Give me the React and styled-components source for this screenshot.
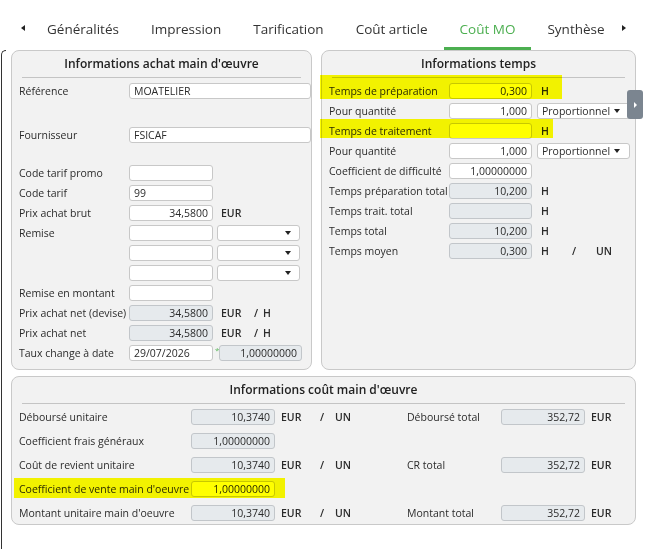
import styled, { createGlobalStyle } from 'styled-components'

const GlobalStyle = createGlobalStyle`
  body {
    margin: 0;
    background: #fff;
    font-family: "Open Sans", "Noto Sans", sans-serif;
    color: #333;
  }
`

const Page = styled.div`
  position: relative;
  width: 654px;
  height: 549px;
  &::before {
    content: '';
    position: absolute;
    left: 1px;
    top: 40px;
    bottom: 4px;
    width: 4px;
    border: 1.5px solid #333;
    border-right: none;
    border-radius: 5px 0 0 5px;
  }
`

const TabBar = styled.nav`
  display: flex;
  height: 40px;
  margin-top: 10px;
  padding-left: 14px;
`

const Arrow = styled.span`
  display: flex;
  align-items: center;
  justify-content: center;
  width: ${p => p.$w}px;
  padding-bottom: 4px;
  &::after {
    content: '';
    border-top: 3.5px solid transparent;
    border-bottom: 3.5px solid transparent;
    ${p => (p.$dir === 'left' ? 'border-right: 4px solid #222;' : 'border-left: 4px solid #222;')}
  }
`

const Tab = styled.div`
  display: flex;
  align-items: center;
  padding: 0 16px;
  font-size: 13.5px;
  color: ${p => (p.$active ? '#4caf50' : '#333')};
  border-bottom: 3px solid ${p => (p.$active ? '#4caf50' : 'transparent')};
`

const SideKnob = styled.div`
  position: absolute;
  left: 627px;
  top: 80px;
  width: 16px;
  height: 29px;
  border-radius: 3px;
  background: #7b8590;
  display: flex;
  align-items: center;
  justify-content: center;
  &::after {
    content: '';
    border-top: 3px solid transparent;
    border-bottom: 3px solid transparent;
    border-left: 3px solid #fff;
  }
`

const Content = styled.main`
  display: grid;
  grid-template-columns: 301px 315px;
  grid-template-rows: 320px auto;
  gap: 6px 9px;
  padding-left: 11px;
`

const Panel = styled.section`
  position: relative;
  box-sizing: border-box;
  background: #f2f2f2;
  border: 1px solid #c9c9c9;
  border-radius: 8px;
  padding: 4px 0 1px;
  ${p => p.$wide && 'grid-column: 1 / -1;'}
`

const Title = styled.h2`
  margin: 0 0 4px;
  height: 18px;
  line-height: 18px;
  font-size: 12px;
  font-weight: 600;
  text-align: center;
  color: #222;
`

const Rule = styled.div`
  margin: 0 10px 3px;
  border-top: 1px solid #c4c4c4;
`

const Row = styled.div`
  position: relative;
  display: flex;
  align-items: center;
  height: 20px;
  padding-left: 7px;
  margin-top: ${p => p.$gap || 0}px;
`

const CostRow = styled.div`
  position: relative;
  display: grid;
  grid-template-columns: 172px 84px 45px 15px 72px 94px 84px auto;
  align-items: center;
  height: 20px;
  padding-left: 7px;
  & + & {
    margin-top: 4px;
  }
`

const Label = styled.span`
  flex: none;
  width: ${p => (p.$w ? `${p.$w}px` : 'auto')};
  font-size: 10.5px;
  white-space: nowrap;
  color: #2b2b2b;
`

const Field = styled.input`
  box-sizing: border-box;
  flex: none;
  width: ${p => p.$w || 84}px;
  height: 16px;
  margin: 0;
  padding: 0 4px;
  border: 1px solid ${p => (p.$ro ? '#c2c6ca' : '#c8c8c8')};
  border-radius: 3px;
  background: ${p => (p.$ro ? '#e6eaed' : '#fff')};
  font-family: inherit;
  font-size: 10.5px;
  color: #2b2b2b;
  text-align: ${p => (p.$num ? 'right' : 'left')};
  outline: none;
`

const Select = styled.div`
  box-sizing: border-box;
  flex: none;
  display: flex;
  align-items: center;
  width: ${p => p.$w}px;
  height: 16px;
  margin-left: ${p => p.$ml}px;
  padding: 0 ${p => p.$pr || 8}px 0 4px;
  border: 1px solid #c8c8c8;
  border-radius: 3px;
  background: #fff;
  font-size: 10.5px;
  color: #2b2b2b;
  &::after {
    content: '';
    margin-left: auto;
    border-left: 3.5px solid transparent;
    border-right: 3.5px solid transparent;
    border-top: 4px solid #222;
  }
`

const Unit = styled.span`
  flex: none;
  box-sizing: border-box;
  width: ${p => (p.$w ? `${p.$w}px` : 'auto')};
  margin-left: ${p => p.$ml ?? 0}px;
  padding-left: ${p => p.$pl || 0}px;
  font-size: 10.5px;
  font-weight: 600;
  color: #2b2b2b;
`

const Star = styled.span`
  flex: none;
  width: 6px;
  padding-left: 2px;
  box-sizing: border-box;
  align-self: flex-start;
  margin-top: 3px;
  font-size: 8px;
  line-height: 8px;
  color: #5cb85c;
`

const Mark = styled.span`
  position: absolute;
  z-index: 2;
  pointer-events: none;
  left: ${p => p.$l}px;
  top: ${p => p.$t}px;
  width: ${p => p.$w}px;
  height: ${p => p.$h}px;
  background: #ffff00;
  mix-blend-mode: multiply;
`

const tabs = ['Généralités', 'Impression', 'Tarification', 'Coût article', 'Coût MO', 'Synthèse']

function EurPerH() {
  return (
    <>
      <Unit $ml={8} $w={33}>EUR</Unit>
      <Unit $w={9}>/</Unit>
      <Unit>H</Unit>
    </>
  )
}

function PurchasePanel() {
  const L = 110
  return (
    <Panel>
      <Title>Informations achat main d'œuvre</Title>
      <Rule />
      <Row>
        <Label $w={L}>Référence</Label>
        <Field $w={182} readOnly value="MOATELIER" />
      </Row>
      <Row $gap={24}>
        <Label $w={L}>Fournisseur</Label>
        <Field $w={182} readOnly value="FSICAF" />
      </Row>
      <Row $gap={18}>
        <Label $w={L}>Code tarif promo</Label>
        <Field readOnly value="" />
      </Row>
      <Row>
        <Label $w={L}>Code tarif</Label>
        <Field readOnly value="99" />
      </Row>
      <Row>
        <Label $w={L}>Prix achat brut</Label>
        <Field $num readOnly value="34,5800" />
        <Unit $ml={8}>EUR</Unit>
      </Row>
      {['Remise', '', ''].map((l, i) => (
        <Row key={i}>
          <Label $w={L}>{l}</Label>
          <Field readOnly value="" />
          <Select $ml={4} $w={83} />
        </Row>
      ))}
      <Row>
        <Label $w={L}>Remise en montant</Label>
        <Field readOnly value="" />
      </Row>
      <Row>
        <Label $w={L}>Prix achat net (devise)</Label>
        <Field $ro $num readOnly value="34,5800" />
        <EurPerH />
      </Row>
      <Row>
        <Label $w={L}>Prix achat net</Label>
        <Field $ro $num readOnly value="34,5800" />
        <EurPerH />
      </Row>
      <Row>
        <Label $w={L}>Taux change à date</Label>
        <Field readOnly value="29/07/2026" />
        <Star>*</Star>
        <Field $ro $num $w={83} readOnly value="1,00000000" />
      </Row>
    </Panel>
  )
}

function TimePanel() {
  const L = 120
  return (
    <Panel>
      <Title>Informations temps</Title>
      <Rule />
      <Row>
        <Mark $l={-2} $t={-6} $w={242} $h={24} />
        <Label $w={L}>Temps de préparation</Label>
        <Field $w={83} $num readOnly value="0,300" />
        <Unit $ml={9}>H</Unit>
      </Row>
      <Row>
        <Label $w={L}>Pour quantité</Label>
        <Field $w={83} $num readOnly value="1,000" />
        <Select $ml={5} $w={93} $pr={9}>Proportionnel</Select>
      </Row>
      <Row>
        <Mark $l={-2} $t={-2} $w={233} $h={19} />
        <Label $w={L}>Temps de traitement</Label>
        <Field $w={83} $num readOnly value="" />
        <Unit $ml={9}>H</Unit>
      </Row>
      <Row>
        <Label $w={L}>Pour quantité</Label>
        <Field $w={83} $num readOnly value="1,000" />
        <Select $ml={5} $w={93} $pr={9}>Proportionnel</Select>
      </Row>
      <Row>
        <Label $w={L}>Coefficient de difficulté</Label>
        <Field $w={83} $num readOnly value="1,00000000" />
      </Row>
      <Row>
        <Label $w={L}>Temps préparation total</Label>
        <Field $w={83} $ro $num readOnly value="10,200" />
        <Unit $ml={9}>H</Unit>
      </Row>
      <Row>
        <Label $w={L}>Temps trait. total</Label>
        <Field $w={83} $ro $num readOnly value="" />
        <Unit $ml={9}>H</Unit>
      </Row>
      <Row>
        <Label $w={L}>Temps total</Label>
        <Field $w={83} $ro $num readOnly value="10,200" />
        <Unit $ml={9}>H</Unit>
      </Row>
      <Row>
        <Label $w={L}>Temps moyen</Label>
        <Field $w={83} $ro $num readOnly value="0,300" />
        <Unit $ml={9} $w={31}>H</Unit>
        <Unit $w={24}>/</Unit>
        <Unit>UN</Unit>
      </Row>
    </Panel>
  )
}

const costRows = [
  { label: 'Déboursé unitaire', value: '10,3740', unit: true, total: 'Déboursé total', totalValue: '352,72' },
  { label: 'Coefficient frais généraux', value: '1,00000000' },
  { label: 'Coût de revient unitaire', value: '10,3740', unit: true, total: 'CR total', totalValue: '352,72' },
  { label: "Coefficient de vente main d'oeuvre", value: '1,00000000', editable: true, marked: true },
  { label: "Montant unitaire main d'oeuvre", value: '10,3740', unit: true, total: 'Montant total', totalValue: '352,72' },
]

function CostPanel() {
  return (
    <Panel $wide>
      <Title>Informations coût main d'œuvre</Title>
      <Rule />
      {costRows.map(r => (
        <CostRow key={r.label}>
          {r.marked && <Mark $l={2} $t={-1} $w={271} $h={20} />}
          <Label>{r.label}</Label>
          <Field $ro={!r.editable} $num readOnly value={r.value} />
          {r.unit && (
            <>
              <Unit $pl={6}>EUR</Unit>
              <Unit>/</Unit>
              <Unit>UN</Unit>
              <Label>{r.total}</Label>
              <Field $ro $num readOnly value={r.totalValue} />
              <Unit $pl={6}>EUR</Unit>
            </>
          )}
        </CostRow>
      ))}
    </Panel>
  )
}

export default function App() {
  return (
    <>
      <GlobalStyle />
      <Page>
        <TabBar>
          <Arrow $dir="left" $w={17} />
          {tabs.map(t => (
            <Tab key={t} $active={t === 'Coût MO'}>{t}</Tab>
          ))}
          <Arrow $dir="right" $w={7} />
        </TabBar>
        <Content>
          <PurchasePanel />
          <TimePanel />
          <CostPanel />
        </Content>
        <SideKnob />
      </Page>
    </>
  )
}
